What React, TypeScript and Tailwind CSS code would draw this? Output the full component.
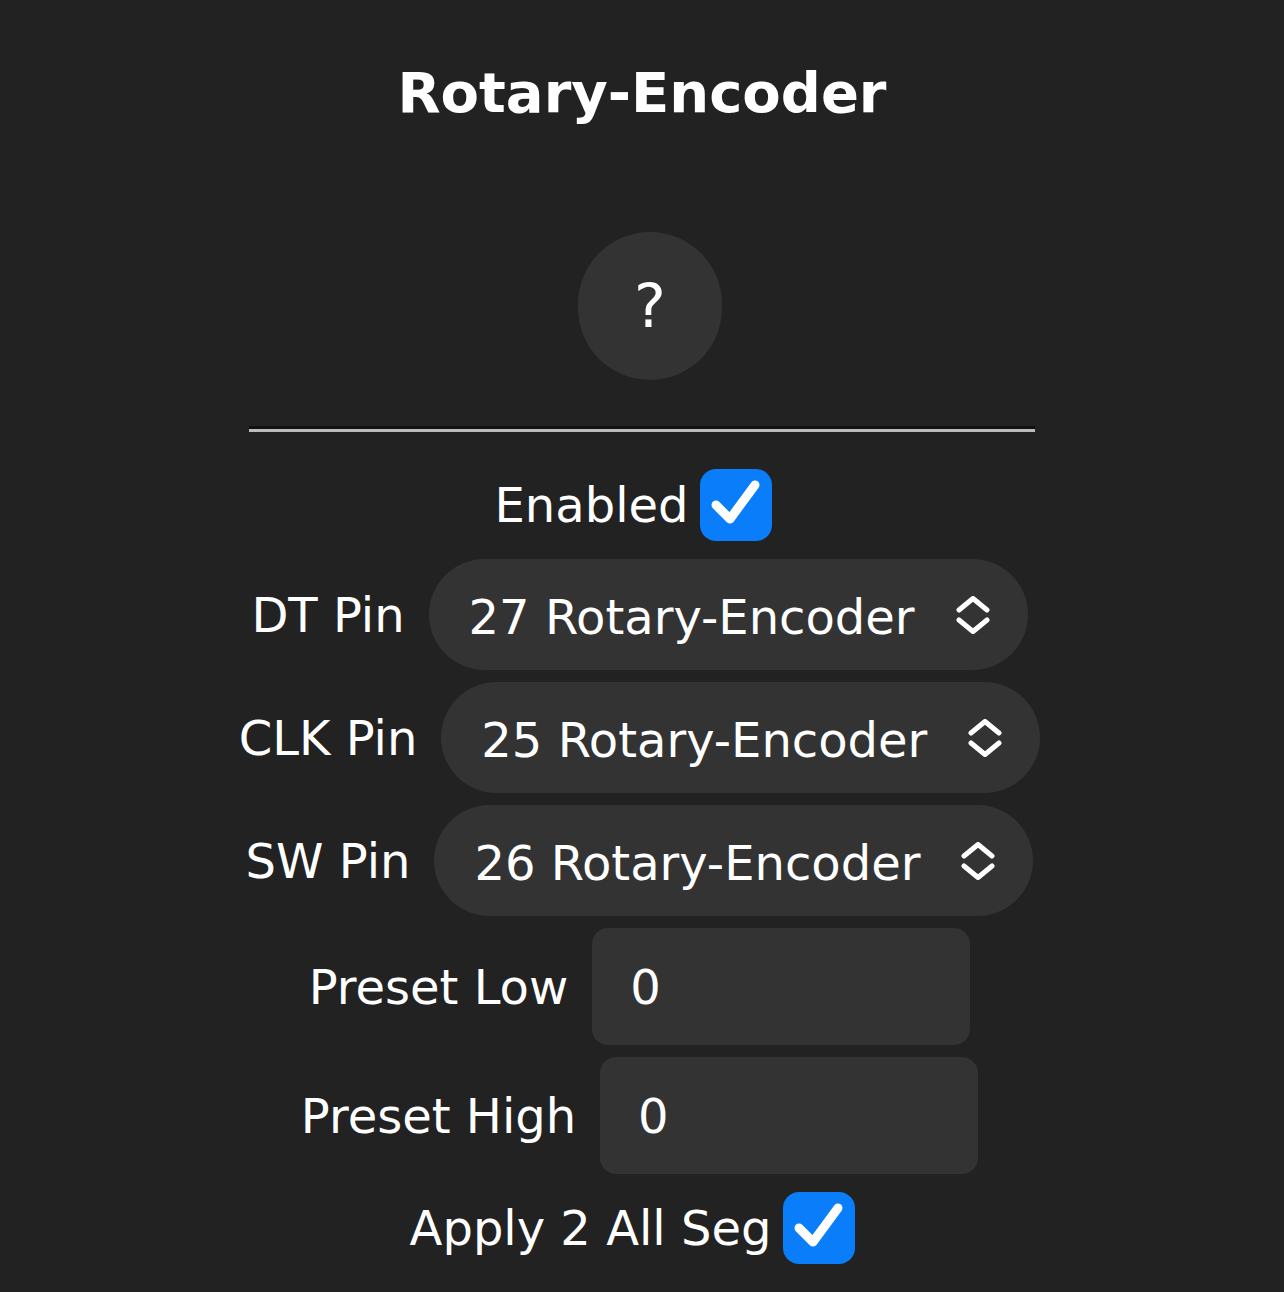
import React from 'react';

const font = { fontFamily: '"DejaVu Sans", Verdana, sans-serif' };

const CheckBox: React.FC = () => (
  <div className="w-[72px] h-[72px] rounded-[16px] bg-[#0a7dfb] flex items-center justify-center shrink-0">
    <svg width="72" height="72" viewBox="0 0 72 72">
      <path d="M16 44 L30 58 L55 24" transform="translate(0 -8)" fill="none" stroke="#fff" strokeWidth="9" strokeLinecap="round" strokeLinejoin="round" />
    </svg>
  </div>
);

const Chevrons: React.FC = () => (
  <svg width="34" height="38" viewBox="0 0 34 38" className="shrink-0">
    <path d="M3 14 L17 2.5 L31 14" fill="none" stroke="#fff" strokeWidth="5" strokeLinecap="round" strokeLinejoin="round" />
    <path d="M3 24 L17 35.5 L31 24" fill="none" stroke="#fff" strokeWidth="5" strokeLinecap="round" strokeLinejoin="round" />
  </svg>
);

const PinRow: React.FC<{ label: string; value: string }> = ({ label, value }) => (
  <div className="flex items-center gap-[24px]">
    <span className="text-[48px] leading-none">{label}</span>
    <div className="w-[599px] h-[111px] rounded-full bg-[#333] flex items-center pl-[40px] pr-[38px]">
      <span className="text-[48px] leading-none pt-[4px]">{value}</span>
      <span className="ml-auto">
        <Chevrons />
      </span>
    </div>
  </div>
);

const NumberRow: React.FC<{ label: string; value: string }> = ({ label, value }) => (
  <div className="flex items-center gap-[24px]">
    <span className="text-[48px] leading-none">{label}</span>
    <div className="w-[378px] h-[117px] rounded-[16px] bg-[#333] flex items-center pl-[38px]">
      <span className="text-[48px] leading-none">{value}</span>
    </div>
  </div>
);

export default function App() {
  return (
    <div className="min-h-screen bg-[#222] text-white flex flex-col items-center" style={font}>
      <h1 className="text-[56px] leading-[56px] font-bold mt-[65px]">Rotary-Encoder</h1>

      <button className="mt-[111px] ml-[16px] w-[144px] h-[148px] rounded-full bg-[#333] flex items-center justify-center text-[60px] leading-none text-white">
        ?
      </button>

      <div className="mt-[46px] w-[786px] border-t-[3px] border-b-[3px] border-t-[#111] border-b-[#bbb]" />

      <div className="mr-[5px] flex flex-col items-center">
        <div className="mt-[37px] mr-[12px] flex items-center gap-[12px]">
          <span className="text-[48px] leading-none">Enabled</span>
          <CheckBox />
        </div>

        <div className="mt-[18px] flex flex-col items-center gap-[12px]">
          <PinRow label="DT Pin" value="27 Rotary-Encoder" />
          <PinRow label="CLK Pin" value="25 Rotary-Encoder" />
          <PinRow label="SW Pin" value="26 Rotary-Encoder" />
          <NumberRow label="Preset Low" value="0" />
          <NumberRow label="Preset High" value="0" />
        </div>

        <div className="mt-[18px] mr-[14px] flex items-center gap-[12px]">
          <span className="text-[48px] leading-none">Apply 2 All Seg</span>
          <CheckBox />
        </div>
      </div>
    </div>
  );
}
